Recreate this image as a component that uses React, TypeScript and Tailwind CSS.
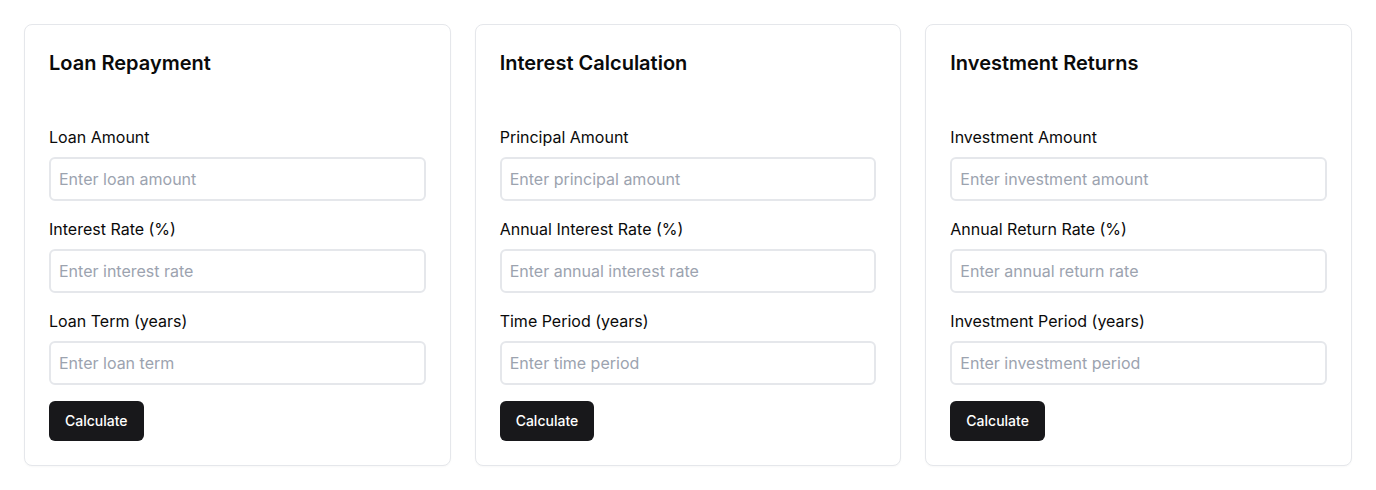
const calculators = [
  {
    title: 'Loan Repayment',
    fields: [
      { label: 'Loan Amount', placeholder: 'Enter loan amount' },
      { label: 'Interest Rate (%)', placeholder: 'Enter interest rate' },
      { label: 'Loan Term (years)', placeholder: 'Enter loan term' },
    ],
  },
  {
    title: 'Interest Calculation',
    fields: [
      { label: 'Principal Amount', placeholder: 'Enter principal amount' },
      { label: 'Annual Interest Rate (%)', placeholder: 'Enter annual interest rate' },
      { label: 'Time Period (years)', placeholder: 'Enter time period' },
    ],
  },
  {
    title: 'Investment Returns',
    fields: [
      { label: 'Investment Amount', placeholder: 'Enter investment amount' },
      { label: 'Annual Return Rate (%)', placeholder: 'Enter annual return rate' },
      { label: 'Investment Period (years)', placeholder: 'Enter investment period' },
    ],
  },
];

const App = () => {
  return (
    <div className="min-h-screen bg-white p-6 font-['Inter',sans-serif] text-[#0a0a0a]">
      <div className="grid grid-cols-3 gap-6">
        {calculators.map((calc) => (
          <div key={calc.title} className="rounded-lg border border-[#e5e7eb] bg-white p-6 shadow-[0_1px_2px_rgba(0,0,0,0.03)]">
            <h2 className="text-xl font-semibold leading-7">{calc.title}</h2>
            <div className="mt-12 space-y-4">
              {calc.fields.map((f) => (
                <div key={f.label}>
                  <label className="mb-2 block text-base leading-6">{f.label}</label>
                  <input
                    type="text"
                    placeholder={f.placeholder}
                    className="h-11 w-full rounded-md border-2 border-[#e5e7eb] bg-white px-2 text-base outline-none placeholder:text-[#9ca3af]"
                  />
                </div>
              ))}
              <button className="h-10 rounded-md bg-[#18181b] px-4 text-sm font-medium text-white">Calculate</button>
            </div>
          </div>
        ))}
      </div>
    </div>
  );
};

export default App;
